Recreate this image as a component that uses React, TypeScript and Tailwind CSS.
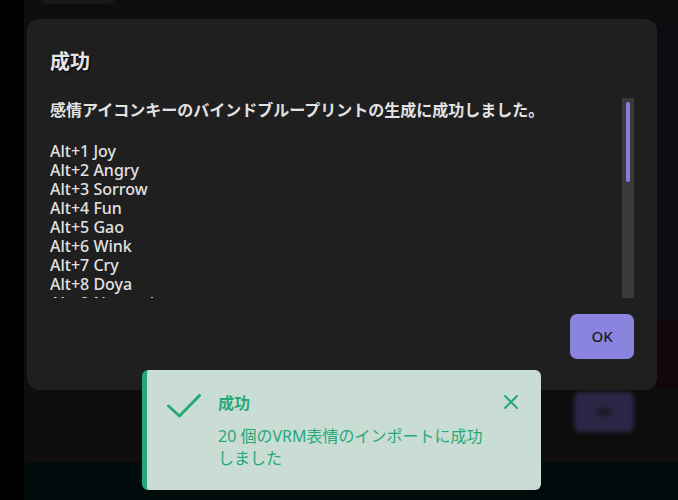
import React from "react";

const font = { fontFamily: '"Noto Sans", "Noto Sans CJK JP", sans-serif' };

const lines = [
  "Alt+1 Joy",
  "Alt+2 Angry",
  "Alt+3 Sorrow",
  "Alt+4 Fun",
  "Alt+5 Gao",
  "Alt+6 Wink",
  "Alt+7 Cry",
  "Alt+8 Doya",
  "Alt+9 Nagomi",
  "Alt+0 Odoroki",
];

export default function App() {
  return (
    <div className="relative h-[500px] w-[678px] overflow-hidden bg-black" style={font}>
      {/* background app */}
      <div className="flex h-full">
        <div className="w-[24px] bg-black" />
        <div className="flex flex-1 flex-col bg-[#0e0e0e]">
          <div className="flex h-[20px] items-start pl-[18px]">
            <div className="h-[3px] w-[72px] rounded-b-full bg-[#1e1e1e] blur-[1px]" />
          </div>
          <div className="flex flex-1">
            <div className="flex-1" />
            <div className="flex w-[22px] flex-col">
              <div className="h-[300px] bg-[#0d0d11]" />
              <div className="flex-1 bg-[#12070a]" />
            </div>
          </div>
          <div className="flex h-[72px] items-start justify-end pr-[44px]">
            <div className="mt-[2px] flex h-[40px] w-[60px] items-center justify-center rounded-md bg-[#2a2846] blur-[2px]">
              <div className="h-[10px] w-[16px] rounded-full bg-[#1c1b2c]" />
            </div>
          </div>
          <div className="h-[38px] rounded-tl-md bg-[#020b0b]" />
        </div>
      </div>

      {/* dialog */}
      <div className="absolute left-[27px] top-[19px] flex h-[371px] w-[630px] flex-col rounded-[12px] bg-[#1f1f1f] px-[23px] pb-[31px] pt-[29px]">
        <h2 className="text-[20px] font-bold leading-[28px] text-[#e6e6e6] [text-shadow:1px_1px_2px_#000]">
          成功
        </h2>
        <div className="mt-[22px] flex h-[200px]">
          <div className="flex-1 overflow-hidden pt-[2px] text-[#e2e2e2]">
            <p className="mb-[22px] text-[16px] font-semibold leading-[20px]">
              感情アイコンキーのバインドブループリントの生成に成功しました。
            </p>
            {lines.map((l) => (
              <div key={l} className="text-[16px] font-medium leading-[19px]">
                {l}
              </div>
            ))}
          </div>
          <div className="flex w-[12px] justify-center bg-[#3a3a3a] pt-[4px]">
            <div className="h-[80px] w-[4px] rounded-full bg-[#8680dc]" />
          </div>
        </div>
        <div className="mt-[16px] flex justify-end">
          <button className="h-[45px] w-[64px] rounded-[7px] bg-[#8a84de] text-[15px] font-medium text-[#1a1a1a]">
            OK
          </button>
        </div>
      </div>

      {/* toast */}
      <div className="absolute left-[142px] top-[370px] flex h-[120px] w-[399px] items-start rounded-[6px] border-l-[5px] border-[#27a878] bg-[#c9ddd5] pl-[20px] pr-[23px] pt-[22px]">
        <svg width="34" height="24" viewBox="0 0 34 24" className="mt-[2px] shrink-0" fill="none">
          <polyline
            points="1.5,12 12.5,22 32.5,1.5"
            stroke="#27a878"
            strokeWidth="3"
            strokeLinecap="round"
            strokeLinejoin="round"
          />
        </svg>
        <div className="ml-[17px] flex-1 text-[#27a878]">
          <div className="text-[16px] font-bold leading-[22px]">成功</div>
          <div className="mt-[11px] max-w-[274px] text-[16px] leading-[22px]">
            20 個のVRM表情のインポートに成功しました
          </div>
        </div>
        <svg width="14" height="14" viewBox="0 0 14 14" className="ml-[12px] mt-[3px] shrink-0" fill="none">
          <path d="M1 1L13 13M13 1L1 13" stroke="#27a878" strokeWidth="2" strokeLinecap="round" />
        </svg>
      </div>
    </div>
  );
}
